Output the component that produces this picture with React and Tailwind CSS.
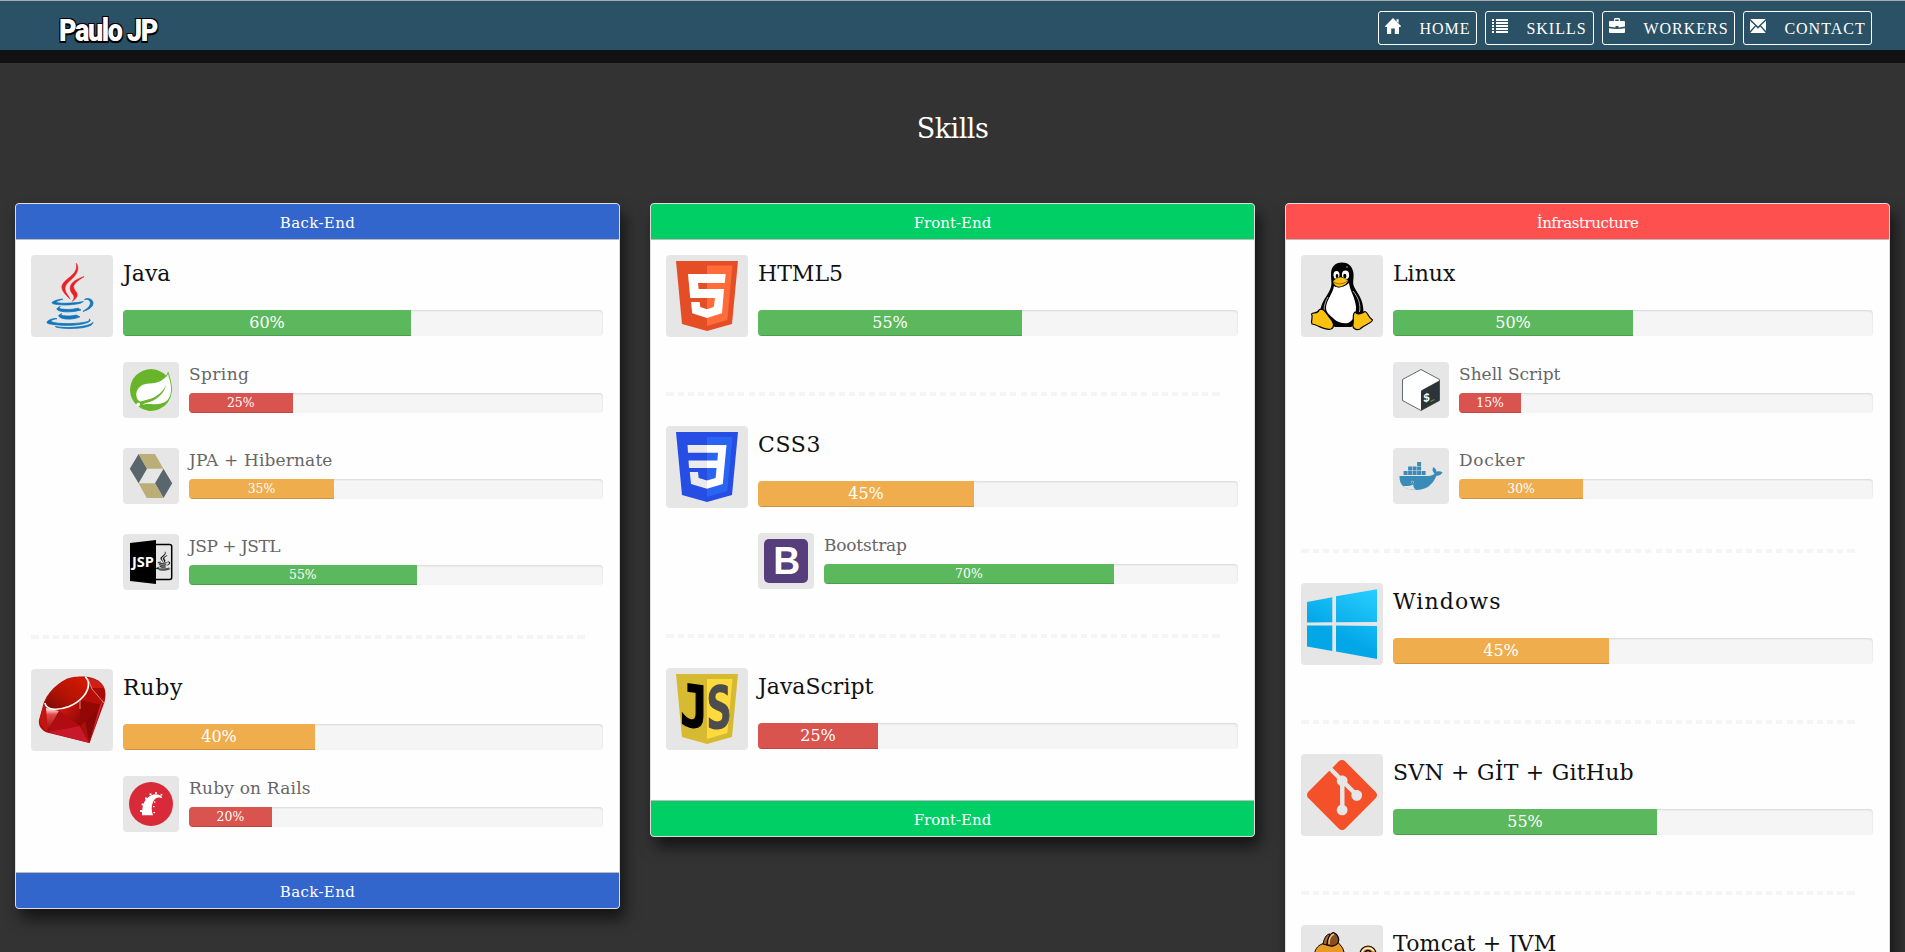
import React from "react";
import { SiSpring, SiGit } from "react-icons/si";

const SERIF = "font-['DejaVu_Serif',serif]";

/* ---------- navigation icons ---------- */

const HomeIcon = () => (
  <svg viewBox="0 0 16 16" className="size-4 fill-white">
    <path d="M8 0 L16 8 L15.4 9 L14 9 V16 H9.8 V10.5 H6.2 V16 H2 V9 H0.4 L0 8.2 Z M11.5 1.2 H13.6 V5 L11.5 3 Z" />
  </svg>
);
const ListIcon = () => (
  <svg viewBox="0 0 16 16" className="size-4 fill-white" shapeRendering="crispEdges">
    {[1, 4, 7, 10, 13].map((y) => (
      <path key={y} d={`M0 ${y}h2v2h-2z M4 ${y}h12v2h-12z`} />
    ))}
  </svg>
);
const CaseIcon = () => (
  <svg viewBox="0 0 16 16" className="size-4 fill-white">
    <path d="M5 3V1.3Q5 0 6.3 0H9.700Q11 0 11 1.300V3H9.800V1.400H6.200V3Z" />
    <path d="M1 3H15Q16 3 16 4V8.500Q13 9.300 9.500 9.400V8H6.500V9.400Q3 9.300 0 8.500V4Q0 3 1 3Z" />
    <path d="M0 10.200Q4 11 8 11T16 10.200V14Q16 15 15 15H1Q0 15 0 14Z" />
  </svg>
);
const MailIcon = () => (
  <svg viewBox="0 0 16 16" className="size-4 fill-white">
    <path d="M0.300 1H15.700L8 8.400Z M0 2.700L5 7.600L0 13Z M16 2.700L11 7.600L16 13Z M5.800 8.600L8 10.700L10.200 8.600L15.700 15H0.300Z" />
  </svg>
);

/* ---------- technology logos ---------- */

const CUP = [
  "M47.617 98.12s-4.767 2.774 3.397 3.71c9.892 1.13 14.947.968 25.845-1.092 0 0 2.871 1.795 6.873 3.351-24.439 10.47-55.308-.607-36.115-5.969zm-2.988-13.665s-5.348 3.959 2.823 4.805c10.567 1.091 18.91 1.18 33.354-1.6 0 0 1.993 2.025 5.132 3.131-29.542 8.64-62.446.68-41.309-6.336z",
  "M102.123 108.229s3.529 2.91-3.888 5.159c-14.102 4.272-58.706 5.56-71.094.171-4.451-1.938 3.899-4.625 6.526-5.192 2.739-.593 4.303-.485 4.303-.485-4.953-3.487-32.013 6.85-13.743 9.815 49.821 8.076 90.817-3.637 77.896-9.468zM49.912 70.294s-22.686 5.389-8.033 7.348c6.188.828 18.518.638 30.011-.326 9.39-.789 18.813-2.474 18.813-2.474s-3.308 1.419-5.704 3.053c-23.042 6.061-67.544 3.238-54.731-2.958 10.832-5.239 19.644-4.643 19.644-4.643zm40.697 22.747c23.421-12.167 12.591-23.86 5.032-22.285-1.848.385-2.677.72-2.677.72s.688-1.079 2-1.543c14.953-5.255 26.451 15.503-4.823 23.725 0-.002.359-.327.468-.617z",
  "M52.214 126.021c22.476 1.437 57-.8 57.817-11.436 0 0-1.571 4.032-18.577 7.231-19.186 3.612-42.854 3.191-56.887.874 0 .001 2.875 2.381 17.647 3.331z",
];
const STEAM = [
  "M69.802 61.271c6.025 6.935-1.58 13.17-1.58 13.17s15.289-7.891 8.269-17.777c-6.559-9.215-11.587-13.792 15.635-29.58 0 .001-42.731 10.67-22.324 34.187z",
  "M76.491 1.587S89.459 14.563 64.188 34.51c-20.266 16.006-4.621 25.13-.007 35.559-11.831-10.673-20.509-20.07-14.688-28.815C58.041 28.42 81.722 22.195 76.491 1.587z",
];

const Java = () => (
  <svg viewBox="0 0 70 70" className="size-full">
    <g transform="translate(1 1.500) scale(.5 .522)">
      {CUP.map((d) => <path key={d} d={d} fill="#1177bd" stroke="#1177bd" strokeWidth="1.600" />)}
      {STEAM.map((d) => <path key={d} d={d} fill="#ea2027" stroke="#ea2027" strokeWidth="1.200" />)}
    </g>
  </svg>
);

const Spring = () => (
  <div className="size-full p-px">
    <div className="size-full rounded-full bg-white">
      <SiSpring className="size-full text-[#68b52b]" />
    </div>
  </div>
);

const Hibernate = () => (
  <svg viewBox="0 0 44 44" className="size-full">
    <path fill="#59666c" d="M9.600 0L.8 14.700L9.600 29.300L18 14.700Z M34.500 14.700L43.200 29.300L34.500 44L26 29.300Z" />
    <path fill="#bcae79" d="M9.600 0H26L34.500 14.700H18Z M9.600 29.300H26L34.500 44H17.700Z" />
  </svg>
);

const Jsp = () => (
  <svg viewBox="0 0 44 44" className="size-full">
    <rect x="24" y="4.600" width="18.700" height="35" rx="2" fill="none" stroke="#000" strokeWidth="1.500" />
    <g transform="translate(24.500 11.500) scale(.15 .148)">
      {[...CUP, ...STEAM].map((d) => <path key={d} d={d} stroke="#000" strokeWidth="2" />)}
    </g>
    <path d="M1 3L27 0V44L1 41Z" />
    <text x="3" y="27" fill="#fff" textLength="22" lengthAdjust="spacingAndGlyphs" className="font-['Open_Sans',sans-serif] text-[14px] font-bold">JSP</text>
  </svg>
);

const Ruby = () => (
  <svg viewBox="0 0 70 70" className="size-full">
    <defs>
      <linearGradient id="rubyTop" x1="1" y1="0" x2="0" y2="1">
        <stop offset="0" stopColor="#d81a04" /><stop offset=".6" stopColor="#b01205" /><stop offset="1" stopColor="#7c0a05" />
      </linearGradient>
      <linearGradient id="rubyLeft" x1="0" y1="0" x2="0" y2="1">
        <stop offset="0" stopColor="#fff" /><stop offset=".3" stopColor="#e04a45" /><stop offset="1" stopColor="#a50a10" />
      </linearGradient>
      <linearGradient id="rubyMid" x1="0" y1="0" x2="1" y2="1">
        <stop offset="0" stopColor="#e01e10" /><stop offset="1" stopColor="#8a0505" />
      </linearGradient>
    </defs>
    <path d="M43 1.500C52 1.500 60 3 65 9C69 14 69 20 67.500 27L52.500 68L10 57.500C4 55 1 50 2 45L7 27C13 12 28 3 43 1.500Z" fill="#a80c08" />
    <path d="M7 28L2 47L9 57L22 36Z" fill="#c21512" />
    <path d="M9 33L22 36L11 55Z" fill="url(#rubyLeft)" />
    <path d="M22 36L43 25V51Z" fill="url(#rubyMid)" />
    <path d="M22 36L43 51L11 57Z" fill="#b00c14" />
    <path d="M11 57L43 51L52.500 68Z" fill="#c9182a" />
    <path d="M43 51L62 30L52.500 68Z" fill="#8a0707" />
    <path d="M43 51L52.500 68L48 45Z" fill="#a81010" />
    <path d="M43 25L66 30L43 51Z" fill="#930705" />
    <path d="M43 25L54 12L66 30Z" fill="#b90e08" />
    <path d="M67.500 22L52.500 68L63 31Z" fill="#dd2a35" />
    <path d="M51 3C58 4 64 6 67 13L54 13Z" fill="#cf2016" />
    <path d="M9 31C8 21 20 7 32 3C42 0 50 2 51 9C51 18 43 27 32 31C22 35 12 36 9 31Z" fill="url(#rubyTop)" />
    <path d="M8 28C9 35 20 36 32 31.500C43 27 52 18 51.500 8C51 5 50 3 48 2" fill="none" stroke="#fff" strokeWidth="1.700" />
    <path d="M51 4L55 14L67 28M43 25L43 34" fill="none" stroke="#f3a49c" strokeWidth=".8" />
  </svg>
);

const Rails = () => (
  <svg viewBox="0 0 44 44" className="size-full">
    <circle cx="22" cy="22" r="22" fill="#d82a38" />
    <path fill="#fff" d="M13 33.300C13 25 14.500 19 19 15.500C24 11 30 11.500 33.500 15.500L32 16C28 14.500 25.500 17 24 20C22 24 22.500 29 24 33.300Z" />
    <g fill="#fff">
      <rect x="11" y="28" width="2.200" height="2" /><rect x="12.700" y="21.500" width="2" height="2" /><rect x="16" y="15.500" width="2" height="2" />
      <rect x="20.500" y="11.500" width="2" height="1.600" /><rect x="26" y="10.200" width="2" height="1.600" /><rect x="31.500" y="12" width="1.800" height="1.500" />
      <rect x="24" y="24" width="1.600" height="1.200" /><rect x="24.500" y="30" width="1.600" height="1.200" /><rect x="25" y="19.500" width="1.400" height="1.200" />
    </g>
  </svg>
);

const Html5 = () => (
  <svg viewBox="0 0 70 70" className="size-full">
    <path fill="#e44d26" d="M4 0H66L60 63L35 70L10 63Z" />
    <path fill="#ff6c39" d="M35 4.500H60.500L55.300 59L35 65Z" />
    <path fill="#fff" d="M16 13H53.700L52.700 22H26L26.700 28H52L50 52.300L35 57L20.200 52.300L19 41H27.700L28.300 46L35 48.300L41.800 46L43 37H18.200Z" />
  </svg>
);

const Css3 = () => (
  <svg viewBox="0 0 70 70" className="size-full">
    <path fill="#264de4" d="M4 0H66L60 63L35 70L10 63Z" />
    <path fill="#2965f1" d="M35 5H60.500L55.300 59L35 65Z" />
    <path fill="#ebebeb" d="M15.500 13H35V20.700H16Z M16.500 28.600H35V36H17Z M17.800 40H26L26.700 46L35 48.500V56.700L19 52Z" />
    <path fill="#fff" d="M35 13H54.500L50.800 52L35 56.700V48.500L43.600 46L44.600 36H35V28.600H45.400L46 20.700H35Z" />
  </svg>
);

const JavaScript = () => (
  <svg viewBox="0 0 70 70" className="size-full overflow-visible">
    <path fill="#d6ba32" d="M4 0H66L60 63L35 70L10 63Z" />
    <path fill="#ffda3e" d="M35 5H60.500L55.300 59L35 65Z" />
    <g className="font-['DejaVu_Sans_Mono',monospace] text-[58px] leading-none font-bold">
      <text transform="translate(8 51) skewY(8)" textLength="28" lengthAdjust="spacingAndGlyphs" fill="#000" stroke="#000" strokeWidth="1.500">J</text>
      <text transform="translate(34.500 55.500) skewY(-7)" textLength="25" lengthAdjust="spacingAndGlyphs" fill="#4d4d4d" stroke="#4d4d4d" strokeWidth="1.200">S</text>
    </g>
  </svg>
);

const Bootstrap = () => (
  <svg viewBox="0 0 44 44" className="size-full">
    <rect width="44" height="44" rx="5" fill="#563d7c" />
    <text x="9.300" y="35" fill="#fff" textLength="27" lengthAdjust="spacingAndGlyphs" className="font-['Liberation_Sans',sans-serif] text-[38px] font-bold">B</text>
  </svg>
);

const Tux = () => (
  <svg viewBox="0 0 70 70" className="size-full">
    <path d="M35 1.500C28 1.500 24 6 24 13C24 19 25 22 24 26C22 33 16 38 14 46C12 52 15 56 20 61L28 66H44L54 60C57 55 57 48 55 41C53 34 48 29 46.500 24C45.500 20 47.500 15 46 10C44.500 4.500 41 1.500 35 1.500Z" />
    <path fill="#fff" d="M27 25C31 28 38 26 42 22C43 30 48 36 49 46C49 54 46 60 41 62C36 63 30 61 27 58C24 55 19 52 19 47C19 40 26 32 27 25Z" />
    <path fill="none" stroke="#ddd" strokeWidth=".8" d="M17 50C17 44 19 39 21 36M46 30C51 36 54 43 52.500 51" />
    <ellipse cx="29.500" cy="14" rx="3" ry="4" fill="#fff" /><ellipse cx="38.500" cy="14" rx="3.600" ry="4.400" fill="#fff" />
    <ellipse cx="30" cy="15" rx="1.300" ry="2" /><ellipse cx="37.800" cy="15" rx="1.600" ry="2.200" />
    <path fill="#fbc111" stroke="#000" strokeWidth=".5" d="M26 20C28 18 31 16 34 16C37 17 40 18 41 19.500C41 23 35 26 32 26C29 26 26 23 26 20Z" />
    <path fill="none" stroke="#7a5200" strokeWidth=".8" d="M27 21C31 24 36 23 40 20.500" />
    <path fill="#fbc111" stroke="#000" strokeWidth="1.200" d="M12 49C16 46 19 52 23 57C27 61 28 66 24 68C19 70 11 64 5 63C3 60 7 57 4.500 53C6 51 11 53 12 49Z" />
    <path fill="#fbc111" stroke="#000" strokeWidth="1.200" d="M48 51C51 55 55 52 58 50.500C61 51 60 55 65.500 59C65 62 57 64 53 68C49 70 45 67 46 63C47 58 45 53 48 51Z" />
    <circle cx="40" cy="6" r=".8" fill="#aaa" />
  </svg>
);

const Bash = () => (
  <svg viewBox="0 0 44 44" className="size-full">
    <path fill="#fff" stroke="#3b464b" strokeWidth=".8" strokeLinejoin="round" d="M22 1.500L40.500 11.500V32.500L22 42.500L3.500 32.500V11.500Z" />
    <path fill="#2b3439" d="M40.500 12.500V32.500L22 42.500V23.500Q22 22.500 23 22Z" />
    <text transform="translate(24.500 34.500) skewY(-14)" fill="#fff" className="font-['Liberation_Sans',sans-serif] text-[12px] font-bold" textLength="6" lengthAdjust="spacingAndGlyphs">$</text>
    <path d="M31.500 33.500L35.500 31.500" stroke="#3fa34d" strokeWidth="1.200" />
  </svg>
);

const Docker = () => (
  <svg viewBox="0 0 44 44" className="size-full">
    <g fill="#3a8bb8">
      {[4.6, 9.1, 13.6, 18.1, 22.6].map((x) => <rect key={x} x={x} y="17" width="4" height="4" />)}
      {[9.1, 13.6, 18.1].map((x) => <rect key={x} x={x} y="12.500" width="4" height="4" />)}
      <rect x="18.100" y="8" width="4" height="4" />
      <path d="M.5 22H29C32 22 34.500 21 35.500 19.500C33 17.500 33 15 34.500 13C36.500 14.500 37.500 16 37.500 17.700C39.500 17 41.500 17.200 43.500 18.300C42.500 20.700 40.500 21.800 37.500 21.700C33.500 31 27 36 17 36C6 36 0 31 .5 22Z" />
    </g>
    <path fill="#e6e6e6" d="M4 32C8 32.300 11 32 14.500 30.500C14 33 15 34.500 17 35.700C11.500 36.200 7 35 4 32Z" />
    <circle cx="13.500" cy="28.200" r="1.400" fill="#9cc5dc" /><circle cx="13.500" cy="28.200" r=".7" fill="#2c6f95" />
  </svg>
);

const Windows = () => (
  <svg viewBox="0 0 70 70" className="size-full">
    <defs>
      <linearGradient id="winGlass" gradientUnits="userSpaceOnUse" x1="60" y1="0" x2="35" y2="50">
        <stop offset="0" stopColor="#26ccff" /><stop offset="1" stopColor="#03a6e6" />
      </linearGradient>
    </defs>
    <path fill="url(#winGlass)" d="M0 13L25.300 8.300V33.300L0 33.600Z M29 7.300L70 .3V33L29 33.300Z M0 36.600H25.300V62L0 57.600Z M29 36.600L70 37V70L29 62.500Z" />
  </svg>
);

const Git = () => <SiGit className="size-full text-[#f4502a]" />;

const Tomcat = () => (
  <svg viewBox="0 0 70 70" className="size-full">
    <path d="M7 24C8 19 10 15 15 13L30 10C33 14 36 16 37 21L38 32H6Z" fill="#e99a26" stroke="#000" strokeWidth="1" />
    <path d="M16 13C17 8 19 3 23 3L20 14Z" fill="#a5662a" stroke="#000" strokeWidth="1" />
    <path d="M20 14C20 8 23 2 27 1.700C31 3 33 9 31 12C29 15 24 16 20 14Z" fill="#8a4f1f" stroke="#000" strokeWidth="1.200" />
    <path d="M22 13C22 8 24 4 27 3" fill="none" stroke="#f0c08a" strokeWidth="1.500" />
    <circle cx="61" cy="23" r="8" fill="#e99a26" stroke="#000" strokeWidth="1.200" />
    <path d="M54.500 22C56 17 63 15 67 20" fill="none" stroke="#fff" strokeWidth="1.200" />
    <circle cx="61" cy="23" r="3.500" fill="#e99a26" stroke="#000" strokeWidth="1.600" />
  </svg>
);

/* ---------- page data ---------- */

const GREEN = "bg-[#5cb85c]";
const ORANGE = "bg-[#f0ad4e]";
const RED = "bg-[#d9534f]";

const COLUMNS = [
  {
    name: "Back-End",
    tone: "bg-[#3366cc]",
    tracking: "tracking-[0.35px]",
    skills: [
      {
        name: "Java", value: 60, color: GREEN, Icon: Java,
        subs: [
          { name: "Spring", value: 25, color: RED, Icon: Spring, tracking: "tracking-[0.4px]" },
          { name: "JPA + Hibernate", value: 35, color: ORANGE, Icon: Hibernate, tracking: "tracking-[0.15px]" },
          { name: "JSP + JSTL", value: 55, color: GREEN, Icon: Jsp, tracking: "tracking-[-0.5px]" },
        ],
      },
      {
        name: "Ruby", value: 40, color: ORANGE, Icon: Ruby, tracking: "tracking-[0.7px]",
        subs: [{ name: "Ruby on Rails", value: 20, color: RED, Icon: Rails, tracking: "tracking-[0.2px]" }],
      },
    ],
  },
  {
    name: "Front-End",
    tone: "bg-[#00cf66]",
    skills: [
      { name: "HTML5", value: 55, color: GREEN, Icon: Html5 },
      {
        name: "CSS3", value: 45, color: ORANGE, Icon: Css3, tracking: "tracking-[0.6px]",
        subs: [{ name: "Bootstrap", value: 70, color: GREEN, Icon: Bootstrap, tracking: "tracking-[-0.2px]" }],
      },
      { name: "JavaScript", value: 25, color: RED, Icon: JavaScript },
    ],
  },
  {
    name: "İnfrastructure",
    tone: "bg-[#ff5050]",
    tracking: "tracking-[-0.45px]",
    skills: [
      {
        name: "Linux", value: 50, color: GREEN, Icon: Tux,
        subs: [
          { name: "Shell Script", value: 15, color: RED, Icon: Bash },
          { name: "Docker", value: 30, color: ORANGE, Icon: Docker, tracking: "tracking-[0.7px]" },
        ],
      },
      { name: "Windows", value: 45, color: ORANGE, Icon: Windows, tracking: "tracking-[1.1px]" },
      { name: "SVN + GİT + GitHub", value: 55, color: GREEN, Icon: Git, tracking: "tracking-[0.22px]" },
      { name: "Tomcat + JVM", value: 45, color: ORANGE, Icon: Tomcat, tracking: "tracking-[0.2px]" },
    ],
  },
];

const NAV = [
  { label: "HOME", width: "w-[99px]", Icon: HomeIcon },
  { label: "SKILLS", width: "w-[109px]", Icon: ListIcon },
  { label: "WORKERS", width: "w-[133px]", Icon: CaseIcon },
  { label: "CONTACT", width: "w-[129px]", Icon: MailIcon },
];

/* ---------- components ---------- */

function Bar({ value, color, small }) {
  return (
    <div className={`overflow-hidden rounded bg-[#f5f5f5] shadow-[inset_0_1px_2px_rgba(0,0,0,0.12)] ${small ? "h-5" : "h-[26px]"}`}>
      <div
        className={`h-full text-center text-white shadow-[inset_0_-1px_0_rgba(0,0,0,0.15)] ${color} ${small ? "text-[12.4px] leading-5" : "text-base leading-[26px]"}`}
        style={{ width: `${value}%` }}
      >
        {value}%
      </div>
    </div>
  );
}

function SubSkill({ name, value, color, Icon, tracking = "tracking-normal" }) {
  return (
    <div className="flex gap-2.5">
      <div className="size-14 shrink-0 rounded bg-[#e6e6e6] p-1.5"><Icon /></div>
      <div className="min-w-0 flex-1">
        <div className={`h-[31px] pt-[2px] text-[17px] leading-5 text-[#666] ${tracking}`}>{name}</div>
        <Bar value={value} color={color} small />
      </div>
    </div>
  );
}

function Skill({ name, value, color, Icon, subs, tracking = "tracking-normal" }) {
  return (
    <div className={subs ? "pb-10" : "pb-[50px]"}>
      <div className="flex gap-2.5">
        <div className="size-[82px] shrink-0 rounded bg-[#e6e6e6] p-1.5"><Icon /></div>
        <div className="min-w-0 flex-1">
          <div className={`h-[55px] pt-[7px] text-[22px] leading-6 text-[#111] ${tracking}`}>{name}</div>
          <Bar value={value} color={color} />
        </div>
      </div>
      {subs && (
        <div className="mt-[25px] flex flex-col gap-[30px] pl-[92px]">
          {subs.map((s) => <SubSkill key={s.name} {...s} />)}
        </div>
      )}
    </div>
  );
}

function Separator() {
  return (
    <div className="mt-[5px] mb-[30px] flex h-1 w-[554px] gap-1">
      <div className="w-2 bg-[#f5f5f5]" />
      <div className="flex-1 bg-[repeating-linear-gradient(90deg,#f5f5f5_0px,#f5f5f5_6px,transparent_6px,transparent_10.075px)]" />
      <div className="w-2 bg-[#f5f5f5]" />
    </div>
  );
}

function Card({ name, tone, skills, tracking = "tracking-normal" }) {
  return (
    <section className="w-[605px] overflow-hidden rounded border border-[#ddd] bg-[#fefefe] shadow-[5px_10px_15px_rgba(0,0,0,0.6)]">
      <h2 className={`h-9 border-b border-[#bbb] pt-[2px] text-center text-[15px] leading-[34px] text-white ${tone} ${tracking}`}>{name}</h2>
      <div className="pt-[15px] pr-4 pl-[15px]">
        {skills.map((s, i) => (
          <React.Fragment key={s.name}>
            {i > 0 && <Separator />}
            <Skill {...s} />
          </React.Fragment>
        ))}
      </div>
      <div className={`h-9 border-t border-[#bbb] pt-[2px] text-center text-[15px] leading-[34px] text-white ${tone} ${tracking}`}>{name}</div>
    </section>
  );
}

export default function App() {
  return (
    <div className={`h-screen overflow-hidden bg-[#333] ${SERIF}`}>
      <header className="flex h-[63px] justify-between border-t border-b-[13px] border-t-[#aaa] border-b-[#121212] bg-[#2a5166] pr-[33px] pl-[59px]">
        <a className="mt-[14px] h-8 scale-y-115 font-['Roboto',sans-serif] text-[27px] leading-8 font-black tracking-[-1.4px] text-white [text-shadow:-1px_-1px_0_#000,1px_-1px_0_#000,-1px_1px_0_#000,1px_1px_0_#000]">
          Paulo JP
        </a>
        <nav className="flex gap-2 pt-2.5">
          {NAV.map(({ label, width, Icon }) => (
            <a key={label} className={`flex h-[34px] rounded-[3px] border border-white pl-[6.4px] font-['Liberation_Serif',serif] text-base tracking-[1px] text-white ${width}`}>
              <span className="w-[34px] shrink-0 pt-[6px]"><Icon /></span>
              <span className="pt-[8px] leading-[18px]">{label}</span>
            </a>
          ))}
        </nav>
      </header>
      <main>
        <h1 className="h-[140px] pt-[50px] text-center text-[27px] leading-[32px] tracking-[-0.5px] text-white">Skills</h1>
        <div className="flex items-start gap-[30px] px-[15px]">
          {COLUMNS.map((c) => <Card key={c.name} {...c} />)}
        </div>
      </main>
    </div>
  );
}
